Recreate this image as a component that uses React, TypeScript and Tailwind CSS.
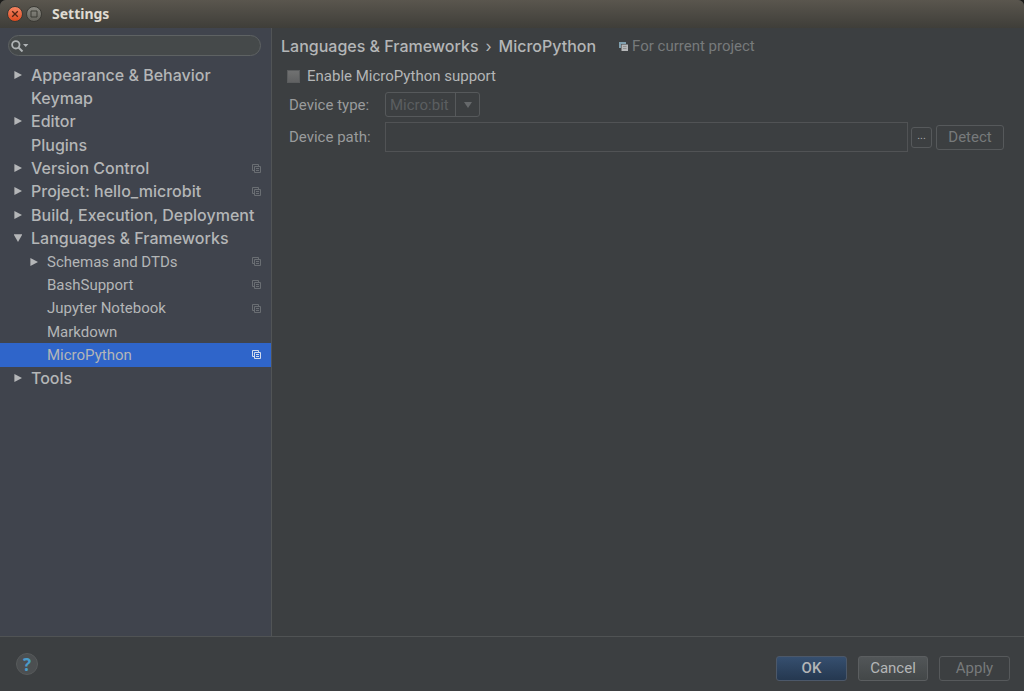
import React, { useState } from "react";

type Item = {
  label: string;
  level: 0 | 1;
  arrow?: "right" | "down";
  project?: boolean;
};

const ITEMS: Item[] = [
  { label: "Appearance & Behavior", level: 0, arrow: "right" },
  { label: "Keymap", level: 0 },
  { label: "Editor", level: 0, arrow: "right" },
  { label: "Plugins", level: 0 },
  { label: "Version Control", level: 0, arrow: "right", project: true },
  { label: "Project: hello_microbit", level: 0, arrow: "right", project: true },
  { label: "Build, Execution, Deployment", level: 0, arrow: "right" },
  { label: "Languages & Frameworks", level: 0, arrow: "down" },
  { label: "Schemas and DTDs", level: 1, arrow: "right", project: true },
  { label: "BashSupport", level: 1, project: true },
  { label: "Jupyter Notebook", level: 1, project: true },
  { label: "Markdown", level: 1 },
  { label: "MicroPython", level: 1, project: true },
  { label: "Tools", level: 0, arrow: "right" },
];

function TreeArrow({ dir }: { dir?: "right" | "down" }) {
  return (
    <svg viewBox="0 0 8 8" className="h-2 w-2 shrink-0" fill="#b4b6b8" aria-hidden="true">
      {dir === "right" && <path d="M0.4 0L8 4L0.4 8Z" />}
      {dir === "down" && <path d="M-0.4 0.2H8.4L4 8Z" />}
    </svg>
  );
}

function CopyIcon({ active }: { active: boolean }) {
  return (
    <svg
      viewBox="0 0 9 9"
      className="h-[9px] w-[9px] shrink-0"
      fill="none"
      stroke={active ? "#d3dcee" : "#6a6e73"}
      aria-hidden="true"
    >
      <path d="M2 6.5H0.5V0.5H6.5V2" />
      <path d="M2.5 2.5H8.5V8.5H2.5ZM4 4.5H7M4 6.5H7" />
    </svg>
  );
}

function TitleBar() {
  return (
    <header className="flex h-7 shrink-0 items-center rounded-t-md bg-linear-to-b from-[#5a564e] to-[#3f3e39] pl-[7px]">
      <button
        type="button"
        aria-label="Close"
        className="grid h-4 w-4 place-items-center rounded-full border border-[#3a3934] bg-linear-to-b from-[#f58461] to-[#df4a1c]"
      >
        <svg viewBox="0 0 8 8" className="h-2 w-2" stroke="#4f2414" strokeWidth="1.3" aria-hidden="true">
          <path d="M1.2 1.2L6.8 6.8M6.8 1.2L1.2 6.8" />
        </svg>
      </button>
      <button
        type="button"
        aria-label="Maximize"
        className="ml-[3px] grid h-4 w-4 place-items-center rounded-full border border-[#3a3934] bg-linear-to-b from-[#8b8a83] to-[#66655e]"
      >
        <svg viewBox="0 0 8 8" className="h-2 w-2" fill="none" stroke="#3b3a35" aria-hidden="true">
          <path d="M1 1H7V7H1Z" />
        </svg>
      </button>
      <h1 className="ml-2.5 font-['Noto_Sans','Open_Sans',sans-serif] text-sm font-bold text-[#dfdbd2]">Settings</h1>
    </header>
  );
}

function Sidebar({ selected, onSelect }: { selected: string; onSelect: (s: string) => void }) {
  return (
    <nav aria-label="Settings categories" className="w-[272px] shrink-0 border-r border-[#515456] bg-[#40444d] pt-[7px]">
      <label className="mr-[10px] ml-2 flex h-[21px] items-center rounded-full border border-[#5e6263] bg-[#45494a] pl-[2px]">
        <svg viewBox="0 0 18 12" className="h-3 w-[18px] shrink-0" fill="none" aria-hidden="true">
          <circle cx="4.8" cy="4.8" r="3.7" stroke="#afb3b5" strokeWidth="1.8" />
          <path d="M7.5 7.5L11.5 11.5" stroke="#afb3b5" strokeWidth="2" />
          <path d="M12 4H17.4L14.7 7Z" fill="#afb3b5" />
        </svg>
        <input
          type="search"
          aria-label="Search settings"
          className="min-w-0 flex-1 bg-transparent px-1 text-[13px] text-[#bbbbbb] outline-none"
        />
      </label>
      <ul className="mt-[7px] grid h-[327px] auto-rows-fr">
        {ITEMS.map((item) => {
          const active = item.label === selected;
          return (
            <li key={item.label} className="min-h-0">
              <button
                type="button"
                aria-current={active ? "page" : undefined}
                onClick={() => onSelect(item.label)}
                className={`flex h-full w-full items-center pr-[10px] text-left whitespace-nowrap ${
                  active ? "bg-[#2f65ca]" : ""
                } ${item.level === 0 ? "pl-[14px] font-['Inter','Liberation_Sans',sans-serif] text-base leading-5 font-medium" : "pl-[30px]"}`}
              >
                <TreeArrow dir={item.arrow} />
                <span className="ml-[9px] flex-1">{item.label}</span>
                {item.project && <CopyIcon active={active} />}
              </button>
            </li>
          );
        })}
      </ul>
    </nav>
  );
}

function MicroPythonPage() {
  return (
    <main className="min-w-0 flex-1 pt-[7px] pr-5 pl-[9px]">
      <div className="flex h-[22px] items-center whitespace-nowrap">
        <h2 className="flex font-['Inter','Liberation_Sans',sans-serif] text-base leading-5 font-medium">
          <span>Languages &amp; Frameworks</span>
          <span className="w-5 text-center font-normal">›</span>
          <span>MicroPython</span>
        </h2>
        <svg viewBox="0 0 9 9" className="ml-[23px] h-[9px] w-[9px]" aria-hidden="true">
          <path d="M0 0H7V2H2V6H0Z" fill="#7f9fae" />
          <path d="M2.5 2.5H9V9H2.5Z" fill="#b5b7b8" />
          <path d="M4 4.5H7.5M4 6.5H7.5" stroke="#8e9091" />
        </svg>
        <span className="ml-1 text-[#777a7b]">For current project</span>
      </div>
      <label className="mt-2 ml-1.5 flex h-[22px] w-fit items-center gap-[7px]">
        <input
          type="checkbox"
          className="h-[13px] w-[13px] appearance-none border border-[#5b5d5e] bg-linear-to-b from-[#707171] to-[#616263] checked:from-[#9aa7b0] checked:to-[#9aa7b0]"
        />
        Enable MicroPython support
      </label>
      <div className="mt-[5px] ml-2 grid grid-cols-[96px_1fr] items-center gap-y-[5px] text-[#999b9c]">
        <label htmlFor="device-type">Device type:</label>
        <div className="relative h-[25px] w-[95px]">
          <select
            id="device-type"
            disabled
            className="h-full w-full appearance-none rounded-[3px] border border-[#56595b] bg-transparent pl-1 text-[#5b5e60] opacity-100"
          >
            <option>Micro:bit</option>
          </select>
          <span className="pointer-events-none absolute inset-y-0 right-0 grid w-[25px] place-items-center border-l border-[#56595b]">
            <svg viewBox="0 0 8 6" className="h-1.5 w-2" fill="#66696b" aria-hidden="true">
              <path d="M0 0H8L4 6Z" />
            </svg>
          </span>
        </div>
        <label htmlFor="device-path">Device path:</label>
        <div className="flex items-center">
          <input
            id="device-path"
            type="text"
            disabled
            className="h-[30px] min-w-0 flex-1 border border-[#515355] bg-transparent px-2"
          />
          <button
            type="button"
            disabled
            aria-label="Browse"
            className="ml-[3px] flex h-[21px] w-[21px] items-center justify-center rounded-[3px] border border-[#56595b] pb-1 text-[11px] leading-none text-[#aaacad]"
          >
            ...
          </button>
          <button
            type="button"
            disabled
            className="ml-1 h-[25px] w-[68px] rounded-[3px] border border-[#56595b] text-[#777a7b]"
          >
            Detect
          </button>
        </div>
      </div>
    </main>
  );
}

function Footer() {
  return (
    <footer className="flex h-[55px] shrink-0 items-center border-t border-[#505354] pt-2 pr-[14px] pl-4">
      <button
        type="button"
        aria-label="Help"
        className="mb-2 grid h-[22px] w-[22px] place-items-center rounded-full border border-[#575a5b] bg-[#4c4f51] font-['Open_Sans',sans-serif] text-[17px] leading-none font-bold text-[#4a9cc9]"
      >
        ?
      </button>
      <div className="ml-auto flex gap-[11px]">
        <button
          type="button"
          className="h-[25px] w-[71px] rounded-[3px] border border-[#4c5869] bg-linear-to-b from-[#364f6f] to-[#253850] font-medium"
        >
          OK
        </button>
        <button
          type="button"
          className="h-[25px] w-[70px] rounded-[3px] border border-[#5b5e60] bg-linear-to-b from-[#525658] to-[#434748]"
        >
          Cancel
        </button>
        <button type="button" disabled className="h-[25px] w-[71px] rounded-[3px] border border-[#56595b] text-[#777a7b]">
          Apply
        </button>
      </div>
    </footer>
  );
}

export default function App() {
  const [selected, setSelected] = useState("MicroPython");
  return (
    <div className="bg-[#1c1c1a]">
      <div className="flex min-h-screen flex-col rounded-t-md bg-[#3c3f41] font-['Roboto','Liberation_Sans',sans-serif] text-[15px] leading-5 text-[#b4b6b7]">
        <TitleBar />
        <div className="flex flex-1">
          <Sidebar selected={selected} onSelect={setSelected} />
          <MicroPythonPage />
        </div>
        <Footer />
      </div>
    </div>
  );
}
